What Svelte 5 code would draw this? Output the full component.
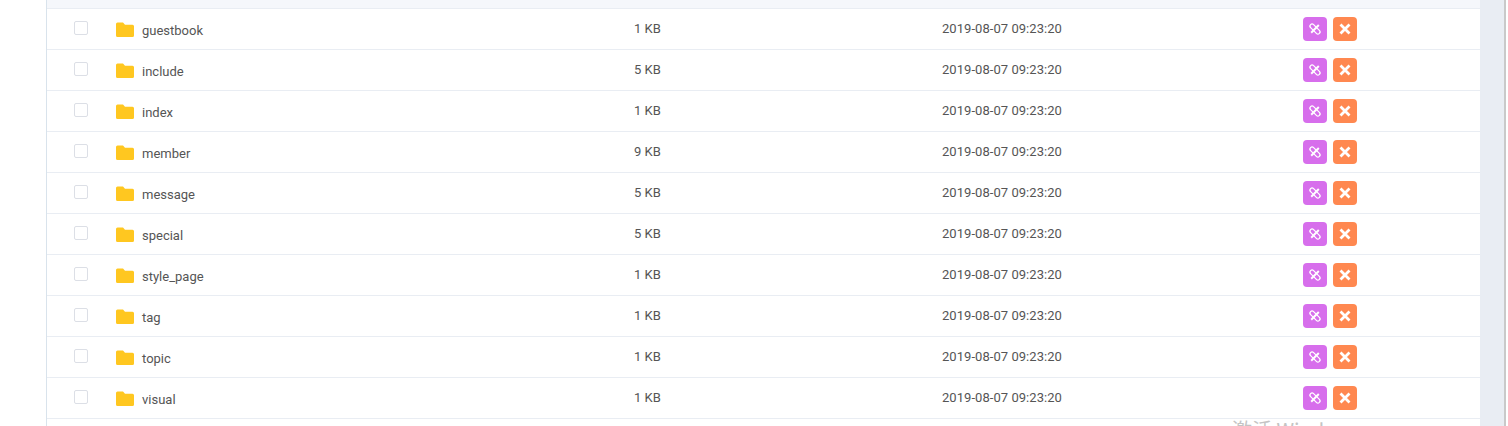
<script>
  const rows = [
    ['guestbook', '1 KB'],
    ['include', '5 KB'],
    ['index', '1 KB'],
    ['member', '9 KB'],
    ['message', '5 KB'],
    ['special', '5 KB'],
    ['style_page', '1 KB'],
    ['tag', '1 KB'],
    ['topic', '1 KB'],
    ['visual', '1 KB']
  ];
</script>

<div class="page">
  <div class="left"></div>
  <div class="card">
    <div class="head"></div>
    {#each rows as [name, size]}
      <div class="row">
        <div class="check"><span class="box"></span></div>
        <div class="name">
          <svg class="folder" viewBox="0 0 18 15" width="18" height="15" aria-hidden="true">
            <path d="M1.5 0.5H7l2 2.2h7.5A1.5 1.5 0 0 1 18 4.2v9.3a1.5 1.5 0 0 1-1.5 1.5h-15A1.5 1.5 0 0 1 0 13.5V2A1.5 1.5 0 0 1 1.5 0.5z" fill="#ffc720"/>
          </svg>
          <span class="label">{name}</span>
        </div>
        <div class="size">{size}</div>
        <div class="date">2019-08-07 09:23:20</div>
        <div class="actions">
          <span class="btn purple">
            <svg viewBox="0 0 14 14" width="14" height="14" aria-hidden="true">
              <rect x="0.8" y="4.9" width="12.4" height="4.2" rx="2.1" transform="rotate(45 7 7)" fill="none" stroke="#fff" stroke-width="1.3"/>
              <path d="M10.8 3 3.2 10.8" fill="none" stroke="#fff" stroke-width="2"/>
            </svg>
          </span>
          <span class="btn orange">
            <svg viewBox="0 0 12 12" width="12" height="12" aria-hidden="true">
              <path d="M1.5 1.5 10.5 10.5M10.5 1.5 1.5 10.5" fill="none" stroke="#fff" stroke-width="2.8"/>
            </svg>
          </span>
        </div>
      </div>
    {/each}
    <div class="foot"><span class="mark">激活 Windows</span></div>
  </div>
  <div class="gutter"></div>
  <div class="track"></div>
</div>

<style>
  :global(body) {
    margin: 0;
    background: #fff;
    overflow: hidden;
  }
  .page {
    display: flex;
    width: 1508px;
    height: 426px;
    overflow: hidden;
    font-family: Roboto, "Liberation Sans", sans-serif;
    font-size: 13px;
    color: #555;
  }
  .left {
    width: 46px;
    flex: none;
  }
  .card {
    width: 1434px;
    flex: none;
    box-sizing: border-box;
    border-left: 1px solid #d9e3ec;
    background: #fff;
  }
  .head {
    height: 8px;
    background: #f5f7fb;
    border-bottom: 1px solid #e9edf3;
  }
  .row {
    display: flex;
    align-items: center;
    height: 40px;
    border-bottom: 1px solid #e9edf3;
  }
  .check {
    width: 27px;
    padding-left: 27px;
    flex: none;
  }
  .box {
    display: block;
    box-sizing: border-box;
    width: 14px;
    height: 14px;
    margin-top: -3px;
    border: 1px solid #dcdfe6;
    border-radius: 2px;
  }
  .name {
    width: 518px;
    padding-left: 15px;
    flex: none;
    display: flex;
    align-items: center;
    gap: 8px;
  }
  .folder {
    margin-top: 1px;
  }
  .label {
    position: relative;
    top: 1px;
  }
  .size {
    width: 308px;
    flex: none;
    margin-top: -1px;
  }
  .date {
    width: 361px;
    flex: none;
    margin-top: -1px;
    letter-spacing: 0.05px;
  }
  .actions {
    display: flex;
    gap: 6px;
  }
  .btn {
    width: 24px;
    height: 24px;
    border-radius: 4px;
    display: flex;
    align-items: center;
    justify-content: center;
  }
  .purple {
    background: #d76eec;
  }
  .orange {
    background: #ff8850;
  }
  .mark {
    display: block;
    margin: 1px 0 0 1185px;
    font-size: 20px;
    line-height: 20px;
    color: #c4c4c4;
    white-space: nowrap;
    font-family: "Noto Sans CJK SC", Roboto, sans-serif;
  }
  .gutter {
    width: 24px;
    flex: none;
    background: #e9edf3;
  }
  .track {
    flex: 1;
    background: #fff;
    border-left: 2px solid #c9c9c9;
  }
</style>
